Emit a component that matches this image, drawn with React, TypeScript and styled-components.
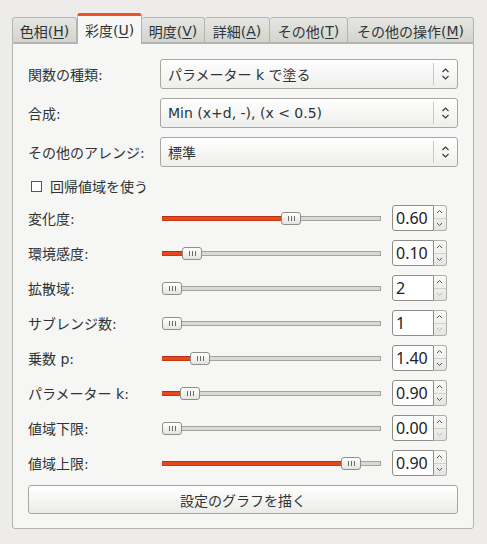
import React from 'react';
import styled, {createGlobalStyle} from 'styled-components';

const GlobalStyle = createGlobalStyle`
  html, body {
    margin: 0;
    padding: 0;
    background: #edeceb;
    font-family: "DejaVu Sans", "Noto Sans CJK JP", sans-serif;
    font-size: 14px;
    color: #2e3436;
  }
`

const Window = styled.div`
  width: 487px;
  height: 544px;
  box-sizing: border-box;
  padding: 13px 13px 0 12px;
`
const TabBar = styled.div`
  display: flex;
  align-items: flex-end;
  height: 30px;
`
type TabProps = {
  active?: boolean;
  width: number;
}
const Tab = styled.div<TabProps>`
  box-sizing: border-box;
  width: ${p => p.width}px;
  height: ${p => p.active ? 31 : 26}px;
  margin-bottom: ${p => p.active ? -1 : 0}px;
  display: flex;
  align-items: center;
  justify-content: center;
  padding-top: ${p => p.active ? 0 : 1}px;
  border: 1px solid #b4b4ae;
  border-bottom: ${p => p.active ? 'none' : '1px solid #b4b4ae'};
  border-top: ${p => p.active ? '3px solid #e8532a' : '1px solid #b4b4ae'};
  border-left: ${p => p.active ? '1px solid #b4b4ae' : 'none'};
  border-radius: 3px 3px 0 0;
  background: ${p => p.active ? '#f7f7f5' : 'linear-gradient(#e6e6e2, #d4d4cf)'};
  white-space: nowrap;
  position: relative;
  z-index: ${p => p.active ? 2 : 1};
  &:first-child {
    border-left: 1px solid #b4b4ae;
  }
  u {
    text-decoration: underline;
    text-underline-offset: 2px;
  }
`
const Panel = styled.div`
  box-sizing: border-box;
  height: 486px;
  border: 1px solid #b4b4ae;
  border-radius: 0 0 3px 3px;
  background: #f6f6f4;
  padding: 15px 15px 14px 15px;
  display: flex;
  flex-direction: column;
  gap: 9px;
`
const ComboRow = styled.div`
  display: grid;
  grid-template-columns: 132px 1fr;
  align-items: center;
  height: 30px;
`
const Label = styled.span`
  white-space: nowrap;
`
const Combo = styled.div`
  box-sizing: border-box;
  height: 30px;
  border: 1px solid #a7a7a2;
  border-radius: 3px;
  background: linear-gradient(#ffffff, #eeeeec);
  display: flex;
  align-items: center;
  padding-left: 7px;
`
const ComboText = styled.span`
  flex: 1;
`
const ComboSep = styled.span`
  width: 1px;
  height: 22px;
  background: #c8c8c4;
`
const ComboArrow = styled.span`
  width: 23px;
  display: flex;
  justify-content: center;
`
const CheckRow = styled.label`
  display: flex;
  align-items: center;
  height: 20px;
  gap: 8px;
  padding-left: 3px;
`
const CheckBox = styled.span`
  box-sizing: border-box;
  width: 11px;
  height: 11px;
  border: 1px solid #555753;
  background: #fff;
`
const SliderRow = styled.div`
  display: grid;
  grid-template-columns: 134px 219px 66px;
  align-items: center;
  height: 26px;
`
const Track = styled.div`
  position: relative;
  height: 5px;
  box-sizing: border-box;
  border: 1px solid #a4a49f;
  background: #d9d9d5;
  margin-right: 11px;
  width: 219px;
`
const Fill = styled.div`
  position: absolute;
  left: -1px;
  top: -1px;
  height: 5px;
  background: #e8461c;
  border-top: 1px solid #b8300f;
  border-bottom: 1px solid #c43812;
  box-sizing: border-box;
`
const Handle = styled.div`
  position: absolute;
  top: -5px;
  width: 20px;
  height: 13px;
  box-sizing: border-box;
  border: 1px solid #8f8f8a;
  border-radius: 3px;
  background: linear-gradient(#ffffff, #e4e4e0);
  display: flex;
  align-items: center;
  justify-content: center;
  gap: 2px;
  span {
    width: 1px;
    height: 5px;
    background: #6b6b68;
  }
`
const Spin = styled.div`
  display: flex;
  height: 26px;
  margin-left: 11px;
`
const SpinEntry = styled.div`
  box-sizing: border-box;
  width: 50px;
  height: 26px;
  border: 1px solid #8e8e89;
  border-radius: 3px 0 0 3px;
  background: #fff;
  display: flex;
  align-items: center;
  padding-left: 3px;
  font-family: "Noto Sans", "Noto Sans CJK JP", sans-serif;
  font-size: 16px;
  color: #222;
`
const SpinButtons = styled.div`
  box-sizing: border-box;
  width: 16px;
  height: 26px;
  border: 1px solid #b0b0ab;
  border-left: none;
  border-radius: 0 3px 3px 0;
  background: linear-gradient(#fafaf8, #e4e4e0);
  display: flex;
  flex-direction: column;
`
type ArrowProps = {
  disabled?: boolean;
}
const SpinArrow = styled.div<ArrowProps>`
  flex: 1;
  display: flex;
  align-items: center;
  justify-content: center;
  color: ${p => p.disabled ? '#b8b8b4' : '#555753'};
  &:first-child {
    border-bottom: 1px solid #d0d0cc;
  }
`
const Button = styled.div`
  box-sizing: border-box;
  height: 29px;
  border: 1px solid #a7a7a2;
  border-radius: 3px;
  background: linear-gradient(#ffffff, #ebebe8);
  display: flex;
  align-items: center;
  justify-content: center;
`

const UpDown = () => (
  <svg width="9" height="14" viewBox="0 0 9 14">
    <path d="M1.5 5 L4.5 2 L7.5 5 M1.5 9 L4.5 12 L7.5 9" fill="none" stroke="#3a3a38" strokeWidth="1.2"/>
  </svg>
)
const Chevron = ({down}: {down?: boolean}) => (
  <svg width="7" height="5" viewBox="0 0 7 5">
    <path d={down ? 'M1 1 L3.5 3.5 L6 1' : 'M1 4 L3.5 1.5 L6 4'} fill="none" stroke="currentColor" strokeWidth="1"/>
  </svg>
)

const tabs = [
  {label: '色相', key: 'H', width: 65},
  {label: '彩度', key: 'U', width: 65, active: true},
  {label: '明度', key: 'V', width: 63},
  {label: '詳細', key: 'A', width: 65},
  {label: 'その他', key: 'T', width: 78},
  {label: 'その他の操作', key: 'M', width: 126},
]

const combos = [
  {label: '関数の種類:', value: 'パラメーター k で塗る'},
  {label: '合成:', value: 'Min (x+d, -), (x < 0.5)'},
  {label: 'その他のアレンジ:', value: '標準'},
]

const sliders = [
  {label: '変化度:', value: '0.60', frac: 0.6},
  {label: '環境感度:', value: '0.10', frac: 0.1},
  {label: '拡散域:', value: '2', frac: 0},
  {label: 'サブレンジ数:', value: '1', frac: 0},
  {label: '乗数 p:', value: '1.40', frac: 0.14},
  {label: 'パラメーター k:', value: '0.90', frac: 0.09},
  {label: '値域下限:', value: '0.00', frac: 0},
  {label: '値域上限:', value: '0.90', frac: 0.9},
]

const App = () => {
  return (
    <>
      <GlobalStyle/>
      <Window>
        <TabBar>
          {tabs.map(t => (
            <Tab key={t.key} active={t.active} width={t.width}>
              {t.label}(<u>{t.key}</u>)
            </Tab>
          ))}
        </TabBar>
        <Panel>
          {combos.map(c => (
            <ComboRow key={c.label}>
              <Label>{c.label}</Label>
              <Combo>
                <ComboText>{c.value}</ComboText>
                <ComboSep/>
                <ComboArrow><UpDown/></ComboArrow>
              </Combo>
            </ComboRow>
          ))}
          <CheckRow>
            <CheckBox/>
            回帰値域を使う
          </CheckRow>
          {sliders.map(s => {
            const left = Math.round(s.frac * 199)
            return (
              <SliderRow key={s.label}>
                <Label>{s.label}</Label>
                <Track>
                  {left > 0 && <Fill style={{width: left + 2}}/>}
                  <Handle style={{left: left - 1}}>
                    <span/><span/><span/>
                  </Handle>
                </Track>
                <Spin>
                  <SpinEntry>{s.value}</SpinEntry>
                  <SpinButtons>
                    <SpinArrow><Chevron/></SpinArrow>
                    <SpinArrow disabled={s.frac === 0}><Chevron down/></SpinArrow>
                  </SpinButtons>
                </Spin>
              </SliderRow>
            )
          })}
          <Button>設定のグラフを描く</Button>
        </Panel>
      </Window>
    </>
  );
};

export default App;
